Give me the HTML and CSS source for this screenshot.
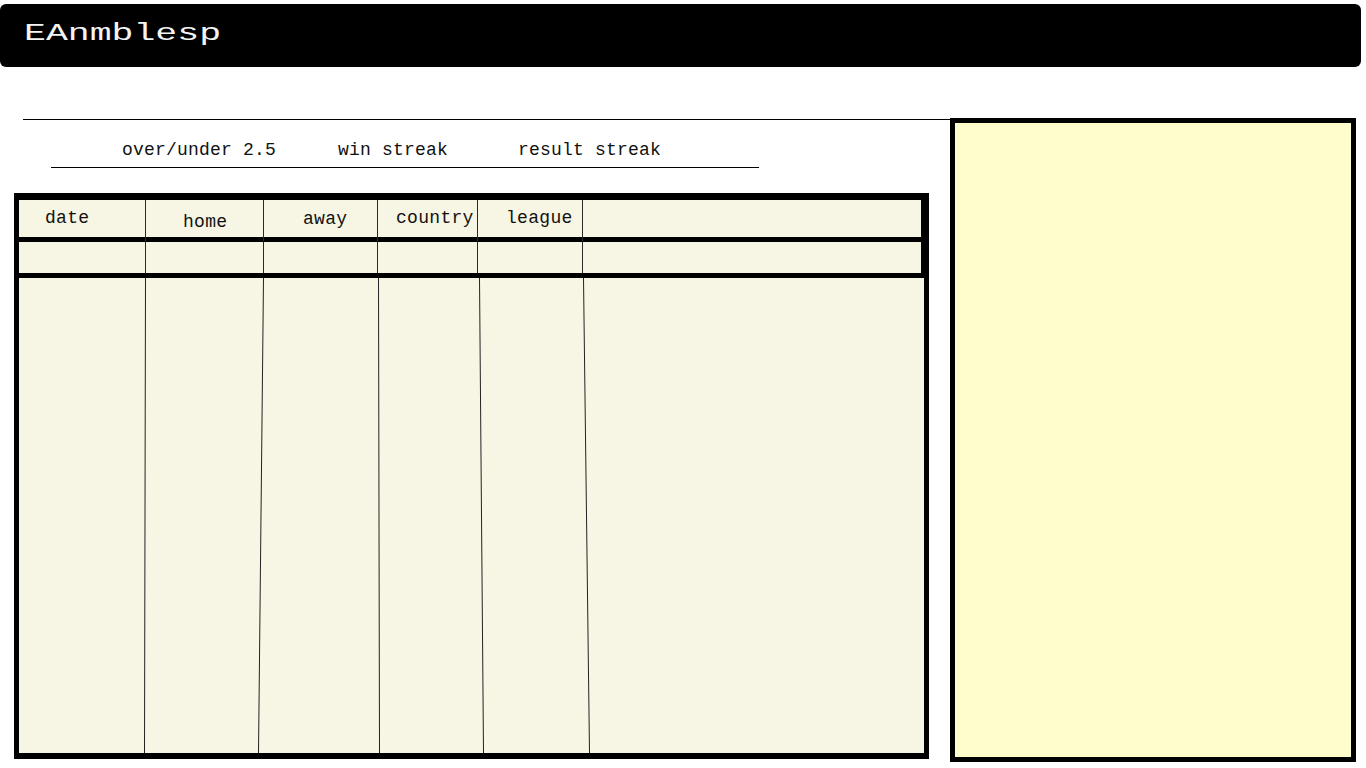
FILE: index.html
```html
<!DOCTYPE html>
<html lang="en">
<head>
<meta charset="utf-8">
<title>EAnmblesp</title>
<link rel="stylesheet" href="styles.css">
</head>
<body>
<header class="topbar">
  <h1 class="brand">EAnmblesp</h1>
</header>
<main class="main">
  <section class="left">
    <div class="divider"></div>
    <nav class="tabs">
      <span class="tab">over/under 2.5</span>
      <span class="tab tab-win">win streak</span>
      <span class="tab tab-result">result streak</span>
    </nav>
    <div class="table">
      <div class="row row-head">
        <div class="cell c-date">date</div>
        <div class="cell c-home">home</div>
        <div class="cell c-away">away</div>
        <div class="cell c-country">country</div>
        <div class="cell c-league">league</div>
        <div class="cell"></div>
      </div>
      <div class="row row-data">
        <div class="cell"></div>
        <div class="cell"></div>
        <div class="cell"></div>
        <div class="cell"></div>
        <div class="cell"></div>
        <div class="cell"></div>
      </div>
      <div class="row-body">
        <svg class="body-lines" width="905" height="475" viewBox="0 0 905 475">
          <g stroke="#222" stroke-width="1">
            <line x1="126.5" y1="0" x2="125.5" y2="475"/>
            <line x1="244.5" y1="0" x2="239.5" y2="475"/>
            <line x1="359.5" y1="0" x2="360.5" y2="475"/>
            <line x1="460.5" y1="0" x2="464.5" y2="475"/>
            <line x1="564.5" y1="0" x2="570.5" y2="475"/>
          </g>
        </svg>
      </div>
    </div>
  </section>
  <aside class="panel"></aside>
</main>
</body>
</html>
```

FILE: styles.css
```css
* { box-sizing: border-box; }

html, body {
  margin: 0;
  padding: 0;
  background: #ffffff;
}

body {
  font-family: "Courier New", "Liberation Mono", monospace;
  color: #111;
}

.topbar {
  margin: 4px 5px 0 0;
  height: 63px;
  background: #000;
  border-radius: 6px;
  padding: 18px 0 0 24px;
}

.brand {
  margin: 0;
  font-weight: normal;
  font-size: 24px;
  line-height: 24px;
  color: #f4f4f4;
  transform: scaleX(1.52);
  transform-origin: left center;
  display: inline-block;
}

.main {
  display: flex;
  margin-top: 51px;
}

.left {
  flex: 0 0 950px;
  display: flex;
  flex-direction: column;
}

.divider {
  margin: 1px 0 0 23px;
  border-top: 1px solid #000;
}

.tabs {
  margin-left: 51px;
  width: 708px;
  display: flex;
  padding: 20px 0 7px 71px;
  border-bottom: 1px solid #000;
  font-size: 18px;
  line-height: 20px;
  letter-spacing: 0.2px;
}

.tab-win { margin-left: 62px; }
.tab-result { margin-left: 70px; }

.table {
  margin: 25px 0 0 14px;
  width: 915px;
  background: #000;
  padding: 7px 5px 6px 5px;
  display: flex;
  flex-direction: column;
  gap: 5px;
}

.row {
  display: grid;
  grid-template-columns: 127px 118px 114px 100px 105px 1fr;
  background: #f7f5e3;
  margin-right: 3px;
}

.row-head { height: 37px; }
.row-data { height: 31px; }

.cell {
  border-right: 1px solid #2a2a2a;
  font-size: 18px;
  line-height: 37px;
  letter-spacing: 0.3px;
  white-space: nowrap;
}

.cell:last-child { border-right: none; }

.c-date { padding-left: 26px; }
.c-home { padding-left: 37px; padding-top: 4px; }
.c-away { padding-left: 39px; padding-top: 1px; }
.c-country { padding-left: 18px; }
.c-league { padding-left: 28px; }

.row-body {
  height: 475px;
  background: #f7f5e3;
}

.body-lines { display: block; }

.panel {
  flex: 0 0 406px;
  height: 644px;
  border: 5px solid #000;
  background: #fffdcc;
}
```
